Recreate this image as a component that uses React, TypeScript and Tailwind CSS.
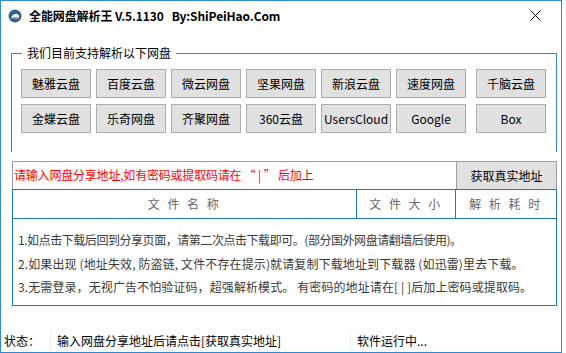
import React from "react";

const row1 = ["魅雅云盘", "百度云盘", "微云网盘", "坚果网盘", "新浪云盘", "速度网盘", "千脑云盘"];
const row2 = ["金蝶云盘", "乐奇网盘", "齐聚网盘", "360云盘", "UsersCloud", "Google", "Box"];

function Btn({ label, last }: { label: string; last?: boolean }) {
  return (
    <div
      className={`h-[29px] w-[70px] flex items-center justify-center bg-[#e1e1e1] border border-[#adadad] text-[12px] text-black ${last ? "ml-[10px]" : "ml-[5px]"} first:ml-0`}
    >
      {label}
    </div>
  );
}

export default function App() {
  return (
    <div
      className="w-[566px] h-[353px] bg-white overflow-hidden"
      style={{ fontFamily: '"Noto Sans CJK SC", "Noto Sans", sans-serif' }}
    >
      <div className="w-[562px] h-[353px] border border-[#2d8bd5] flex flex-col">
        {/* title bar */}
        <div className="h-[29px] flex items-center pl-[7px] pr-[20px] shrink-0">
          <svg width="14" height="14" viewBox="0 0 14 14" className="shrink-0">
            <circle cx="7" cy="7" r="6.5" fill="#2f5f93" />
            <path d="M3.2 9.2 Q2.6 7.6 4.2 7.2 Q4.6 5 6.8 5.2 Q8.4 4 9.8 5.6 Q11.6 6 11 8.2 L10.4 9.4 Z" fill="#fff" />
            <path d="M4 8.6 L10.2 8.6" stroke="#2f5f93" strokeWidth="0.6" />
          </svg>
          <div className="ml-[7px] text-[12px] font-bold text-black leading-none tracking-[-0.1px] whitespace-pre">
            全能网盘解析王 V.5.1130   By:ShiPeiHao.Com
          </div>
          <div className="flex-1" />
          <svg width="11" height="11" viewBox="0 0 11 11">
            <path d="M0.5 0.5 L10.5 10.5 M10.5 0.5 L0.5 10.5" stroke="#000" strokeWidth="1" />
          </svg>
        </div>

        {/* group box */}
        <div className="ml-[10px] mt-[23px] w-[546px] h-[99px] border border-b-0 border-[#2d8bd5] relative pt-[15px] pl-[9px] shrink-0">
          <div className="absolute left-[10px] top-[-9px] bg-white px-[5px] text-[12px] leading-[16px] text-black">
            我们目前支持解析以下网盘
          </div>
          <div className="flex">
            {row1.map((l, i) => (
              <Btn key={l} label={l} last={i === 6} />
            ))}
          </div>
          <div className="flex mt-[6px]">
            {row2.map((l, i) => (
              <Btn key={l} label={l} last={i === 6} />
            ))}
          </div>
        </div>

        {/* input row */}
        <div className="ml-[11px] mt-[9px] w-[545px] h-[28px] flex border-t border-l border-[#a0a0a0] shrink-0">
          <div className="flex-1 flex items-center pl-[1px] pb-[1px] text-[12px] text-[#ff0000] whitespace-pre tracking-[-0.2px]">
            请输入网盘分享地址,如有密码或提取码请在 “ | ” 后加上
          </div>
          <div className="w-[101px] h-[28px] bg-[#e1e1e1] border-l border-r border-[#a0a0a0] flex items-center justify-center text-[12px] text-black">
            获取真实地址
          </div>
        </div>

        {/* table */}
        <div className="ml-[11px] w-[545px] h-[117px] border border-[#1a78d0] flex flex-col shrink-0">
          <div className="h-[29px] flex border-b border-[#1a78d0] text-[12px] text-[#666] shrink-0">
            <div className="w-[343px] flex items-center justify-center tracking-[2.5px] whitespace-pre">文 件 名 称</div>
            <div className="w-[99px] border-l border-[#1a78d0] flex items-center justify-center tracking-[2.5px] whitespace-pre">文 件 大 小</div>
            <div className="flex-1 border-l border-[#1a78d0] flex items-center justify-center tracking-[2.5px] whitespace-pre">解 析 耗 时</div>
          </div>
          <div className="pl-[5px] pt-[9px] text-[12px] text-[#3a3a3a] leading-[23.5px] flex flex-col">
            <div className="whitespace-pre tracking-[-0.45px]">1.如点击下载后回到分享页面，请第二次点击下载即可。(部分国外网盘请翻墙后使用)。</div>
            <div className="whitespace-pre tracking-[0.12px]">2.如果出现 (地址失效, 防盗链, 文件不存在提示)就请复制下载地址到下载器 (如迅雷)里去下载。</div>
            <div className="whitespace-pre tracking-[0.1px]">3.无需登录，无视广告不怕验证码，超强解析模式。 有密码的地址请在[ | ]后加上密码或提取码。</div>
          </div>
        </div>

        {/* status bar */}
        <div className="flex-1 flex items-end pb-[1px]">
          <div className="h-[20px] flex items-center text-[12px] text-black w-full">
            <div className="w-[49px] pl-[3px] h-full flex items-center">状态：</div>
            <div className="w-[300px] border-l border-[#ededed] h-full flex items-center pl-[6px]">
              输入网盘分享地址后请点击[获取真实地址]
            </div>
            <div className="flex-1 border-l border-[#ededed] h-full flex items-center pl-[6px]">
              软件运行中...
            </div>
          </div>
        </div>
      </div>
    </div>
  );
}
